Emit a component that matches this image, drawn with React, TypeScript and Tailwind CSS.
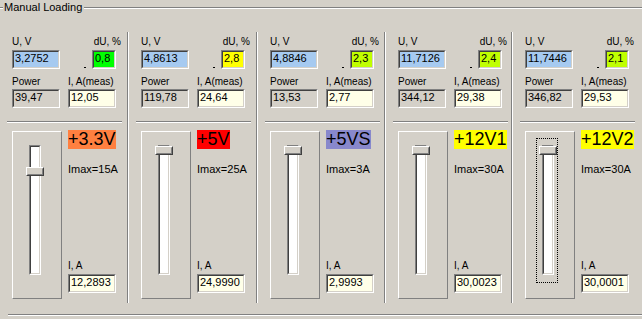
import React from "react";

type Col = {
  w: string;
  u: string;
  du: string;
  duBg: string;
  p: string;
  im: string;
  name: string;
  nameBg: string;
  imax: string;
  i: string;
  v: number;
  max: number;
  focus: boolean;
  sep: boolean;
};

const cols: Col[] = [
  { w: "w-[129px]", u: "3,2752", du: "0,8", duBg: "bg-[#00ff00]", p: "39,47", im: "12,05", name: "+3.3V", nameBg: "bg-[#ff8040]", imax: "Imax=15A", i: "12,2893", v: 12.2893, max: 15, focus: false, sep: true },
  { w: "w-[129px]", u: "4,8613", du: "2,8", duBg: "bg-[#ffff00]", p: "119,78", im: "24,64", name: "+5V", nameBg: "bg-[#ff0000]", imax: "Imax=25A", i: "24,9990", v: 24.999, max: 25, focus: false, sep: true },
  { w: "w-[128px]", u: "4,8846", du: "2,3", duBg: "bg-[#c0ff00]", p: "13,53", im: "2,77", name: "+5VS", nameBg: "bg-[#8888cc]", imax: "Imax=3A", i: "2,9993", v: 2.9993, max: 3, focus: false, sep: true },
  { w: "w-[127px]", u: "11,7126", du: "2,4", duBg: "bg-[#c0ff00]", p: "344,12", im: "29,38", name: "+12V1", nameBg: "bg-[#ffff00]", imax: "Imax=30A", i: "30,0023", v: 30.0023, max: 30, focus: false, sep: true },
  { w: "w-[129px]", u: "11,7446", du: "2,1", duBg: "bg-[#c0ff00]", p: "346,82", im: "29,53", name: "+12V2", nameBg: "bg-[#ffff00]", imax: "Imax=30A", i: "30,0001", v: 30.0001, max: 30, focus: true, sep: false },
];

function Field({ value, bg, w }: { value: string; bg: string; w: string }) {
  return (
    <div className={`${w} h-[19px] border border-t-[#808080] border-l-[#808080] border-b-white border-r-white`}>
      <div className={`h-full border border-t-[#404040] border-l-[#404040] border-b-[#d4d0c8] border-r-[#d4d0c8] ${bg} pl-[1px] text-[11px] leading-[13px] overflow-hidden whitespace-nowrap`}>
        {value}
      </div>
    </div>
  );
}

function Slider({ v, max, focus }: { v: number; max: number; focus: boolean }) {
  const f = Math.max(0, Math.min(1, v / max));
  const top = Math.round(6.5 + (1 - f) * 117);
  return (
    <div className={`relative w-[22px] h-[145px] border ${focus ? "border-dotted border-black" : "border-transparent"}`}>
      <div className="ml-[5px] mt-[6px] w-[12px] h-[130px] border border-t-[#808080] border-l-[#808080] border-b-white border-r-white">
        <div className="h-full border border-t-[#404040] border-l-[#404040] border-b-[#d4d0c8] border-r-[#d4d0c8] bg-white" />
      </div>
      <div
        className="absolute left-[2px] w-[18px] h-[9px] border border-t-white border-l-white border-b-[#404040] border-r-[#404040]"
        style={{ top }}
      >
        <div className="h-full border border-t-[#d4d0c8] border-l-[#d4d0c8] border-b-[#808080] border-r-[#808080] bg-[#d4d0c8]" />
      </div>
    </div>
  );
}

function Column({ c }: { c: Col }) {
  return (
    <div className={`${c.w} flex h-full`}>
      <div className="flex-1 flex flex-col">
        <div className="mt-[3px] flex w-[121px] h-[13px] text-[10px] leading-[13px] whitespace-nowrap">
          <span className="ml-[12px]">U, V</span>
          <span className="ml-auto">dU, %</span>
        </div>
        <div className="mt-[2px] flex h-[19px]">
          <div className="ml-[12px]">
            <Field value={c.u} bg="bg-[#a6caf0]" w="w-[48px]" />
          </div>
          <div className="ml-[24px] self-end mb-[1px] w-[2px] h-[1px] bg-black" />
          <div className="ml-[6px]">
            <Field value={c.du} bg={c.duBg} w="w-[24px]" />
          </div>
        </div>
        <div className="mt-[6px] flex h-[13px] text-[10px] leading-[13px] whitespace-nowrap">
          <span className="ml-[12px] w-[56px]">Power</span>
          <span>I, A(meas)</span>
        </div>
        <div className="mt-[1px] flex h-[19px]">
          <div className="ml-[12px]">
            <Field value={c.p} bg="bg-[#d4d0c8]" w="w-[48px]" />
          </div>
          <div className="ml-[8px]">
            <Field value={c.im} bg="bg-[#ffffe8]" w="w-[48px]" />
          </div>
        </div>
        <div className="mt-[13px] ml-[7px] w-[115px] h-[2px] border-t border-t-[#808080] border-b border-b-white" />
        <div className="mt-[7px] flex">
          <div className="ml-[12px] mt-[1px] w-[50px] h-[168px] border border-t-white border-l-white border-b-[#808080] border-r-[#808080]">
            <div className="ml-[10px] mt-[6px]">
              <Slider v={c.v} max={c.max} focus={c.focus} />
            </div>
          </div>
          <div className="ml-[6px] flex flex-col items-start">
            <div className={`${c.nameBg} h-[19px] text-[18px] leading-[19px] whitespace-nowrap`}>{c.name}</div>
            <div className="mt-[14px] h-[13px] text-[11px] leading-[13px] whitespace-nowrap">{c.imax}</div>
            <div className="mt-[83px] h-[13px] text-[10px] leading-[13px] whitespace-nowrap">I, A</div>
            <div className="mt-[2px]">
              <Field value={c.i} bg="bg-[#ffffe8]" w="w-[48px]" />
            </div>
          </div>
        </div>
      </div>
      {c.sep && <div className="w-[2px] h-full border-l border-l-[#808080] border-r border-r-white" />}
    </div>
  );
}

export default function App() {
  return (
    <div className="w-[642px] h-[319px] overflow-hidden bg-[#d4d0c8] text-black font-['Liberation_Sans',Arial,sans-serif]">
      <div className="flex h-[15px]">
        <div className="w-[3px] mt-[7px] h-[2px] border-t border-t-[#808080] border-b border-b-white" />
        <span className="ml-[1px] mt-[1px] text-[11px] leading-[13px] whitespace-nowrap">Manual Loading</span>
        <div className="flex-1 ml-[2px] mt-[7px] h-[2px] border-t border-t-[#808080] border-b border-b-white" />
      </div>
      <div className="mt-[17px] flex h-[271px]">
        {cols.map((c) => (
          <Column key={c.name} c={c} />
        ))}
      </div>
      <div className="mt-[11px] ml-[8px] h-[2px] border-t border-t-[#808080] border-b border-b-white" />
    </div>
  );
}
